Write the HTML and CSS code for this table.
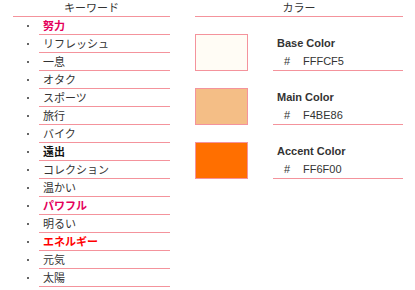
FILE: index.html
```html
<!DOCTYPE html>
<html lang="ja">
<head>
  <meta charset="UTF-8">
  <title>キーワードとカラー</title>
  <link rel="stylesheet" href="styles.css">
</head>
<body>
<div class="board">
  <section class="keywords">
    <h2 class="head">キーワード</h2>
    <ul class="word-list">
      <li><span class="dot"></span><span class="word strong pink">努力</span></li>
      <li><span class="dot"></span><span class="word">リフレッシュ</span></li>
      <li><span class="dot"></span><span class="word">一息</span></li>
      <li><span class="dot"></span><span class="word">オタク</span></li>
      <li><span class="dot"></span><span class="word">スポーツ</span></li>
      <li><span class="dot"></span><span class="word">旅行</span></li>
      <li><span class="dot"></span><span class="word">バイク</span></li>
      <li><span class="dot"></span><span class="word strong black">遠出</span></li>
      <li><span class="dot"></span><span class="word">コレクション</span></li>
      <li><span class="dot"></span><span class="word">温かい</span></li>
      <li><span class="dot"></span><span class="word strong pink">パワフル</span></li>
      <li><span class="dot"></span><span class="word">明るい</span></li>
      <li><span class="dot"></span><span class="word strong red">エネルギー</span></li>
      <li><span class="dot"></span><span class="word">元気</span></li>
      <li><span class="dot"></span><span class="word">太陽</span></li>
    </ul>
  </section>

  <section class="colors">
    <h2 class="head">カラー</h2>
    <div class="swatch-row">
      <div class="swatch base"></div>
      <div class="info">
        <div class="name">Base Color</div>
        <div class="code"><span class="hash">#</span>FFFCF5</div>
      </div>
    </div>
    <div class="swatch-row">
      <div class="swatch main"></div>
      <div class="info">
        <div class="name">Main Color</div>
        <div class="code"><span class="hash">#</span>F4BE86</div>
      </div>
    </div>
    <div class="swatch-row">
      <div class="swatch accent"></div>
      <div class="info">
        <div class="name">Accent Color</div>
        <div class="code"><span class="hash">#</span>FF6F00</div>
      </div>
    </div>
  </section>
</div>
</body>
</html>
```

FILE: styles.css
```css
body {
  margin: 0;
  background: #fff;
  color: #333;
  font-family: "Liberation Sans", "Noto Sans CJK JP", sans-serif;
  font-size: 11px;
}
.board {
  display: flex;
  gap: 25px;
  padding: 0 12px 0 13px;
}
.keywords {
  width: 157px;
}
.colors {
  width: 208px;
}
.head {
  margin: 0;
  height: 16px;
  line-height: 17px;
  font-size: 11px;
  font-weight: normal;
  text-align: center;
  border-bottom: 1px solid #f4939c;
}

/* keyword list */
.word-list {
  list-style: none;
  margin: 0;
  padding: 0;
}
.word-list li {
  display: flex;
  align-items: center;
  height: 18px;
}
.dot {
  width: 2px;
  height: 2px;
  margin: 0 10px 0 14px;
  background: #666;
}
.word {
  flex: 1;
  height: 17px;
  line-height: 19px;
  padding-left: 4px;
  border-bottom: 1px solid #f4939c;
}
.strong { font-weight: bold; }
.pink { color: #e4005a; }
.black { color: #111; }
.red { color: #ff0000; }

/* colour swatches */
.swatch-row {
  display: flex;
  gap: 25px;
  margin-top: 17px;
}
.swatch {
  width: 51px;
  height: 35px;
  border: 1px solid #f4939c;
}
.base { background: #fffcf5; }
.main { background: #f4be86; }
.accent { background: #ff6f00; }
.info {
  flex: 1;
  border-bottom: 1px solid #f4939c;
}
.name {
  height: 18px;
  line-height: 19px;
  padding-left: 4px;
  font-weight: bold;
}
.code {
  height: 18px;
  line-height: 19px;
  padding-left: 11px;
}
.hash {
  display: inline-block;
  width: 19px;
}
```
